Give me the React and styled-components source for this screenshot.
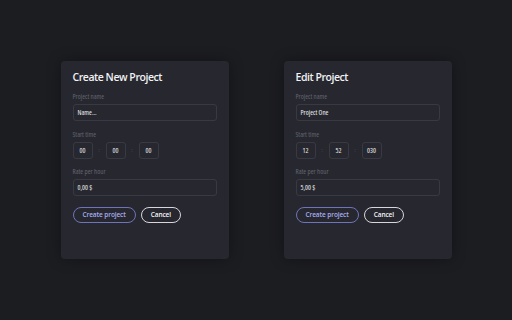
import React from 'react';
import styled, { createGlobalStyle } from 'styled-components';

const GlobalStyle = createGlobalStyle`
  html, body {
    margin: 0;
    padding: 0;
    background: #1c1d21;
  }
  body {
    font-family: 'Open Sans', 'Noto Sans', sans-serif;
  }
`;

export const Page = styled.main`
  width: 512px;
  height: 320px;
  display: flex;
  align-items: center;
  justify-content: center;
  gap: 55px;
`;

export const Card = styled.section`
  width: 168px;
  height: 198px;
  box-sizing: border-box;
  padding: 9px 12px;
  background: #27282f;
  border-radius: 4px;
  box-shadow: 0 0 14px rgba(0, 0, 0, 0.35);
  display: flex;
  flex-direction: column;
`;

export const Title = styled.h2`
  margin: 0 0 9px;
  font-size: 10.5px;
  font-weight: 600;
  letter-spacing: -0.45px;
  line-height: 14px;
  color: #f2f2f5;
`;

export const Field = styled.div`
  display: flex;
  flex-direction: column;
  margin-bottom: 9.5px;
`;

export const Label = styled.label`
  font-size: 7px;
  font-stretch: 75%;
  line-height: 8px;
  color: #62646f;
  margin-bottom: 3px;
`;

export const Input = styled.div`
  height: 17px;
  box-sizing: border-box;
  border: 1px solid #383943;
  border-radius: 3px;
  padding: 0 4px;
  display: flex;
  align-items: center;
  font-size: 7px;
  font-stretch: 75%;
  color: #ececf0;
`;

export const TimeRow = styled.div`
  display: flex;
  align-items: center;
`;

export const TimeBox = styled(Input)`
  width: 20px;
  padding: 0;
  justify-content: center;
`;

export const Colon = styled.span`
  width: 13px;
  text-align: center;
  font-size: 6px;
  color: #4f515a;
`;

export const Actions = styled.div`
  display: flex;
  gap: 5px;
  margin-top: 1.5px;
`;

export const Button = styled.button`
  height: 16px;
  padding: 0 9px;
  border-radius: 8px;
  background: transparent;
  border: 1px solid ${(p) => (p.$primary ? '#6f73b9' : '#d6d6dc')};
  color: ${(p) => (p.$primary ? '#a9acef' : '#f4f4f7')};
  font-family: inherit;
  font-size: 6.5px;
  font-weight: 600;
  letter-spacing: -0.1px;
  line-height: 1;
  cursor: pointer;
`;

const ProjectForm = ({ title, name, time, rate }) => (
  <Card>
    <Title>{title}</Title>
    <Field>
      <Label>Project name</Label>
      <Input>{name}</Input>
    </Field>
    <Field>
      <Label>Start time</Label>
      <TimeRow>
        <TimeBox>{time[0]}</TimeBox>
        <Colon>:</Colon>
        <TimeBox>{time[1]}</TimeBox>
        <Colon>:</Colon>
        <TimeBox>{time[2]}</TimeBox>
      </TimeRow>
    </Field>
    <Field>
      <Label>Rate per hour</Label>
      <Input>{rate}</Input>
    </Field>
    <Actions>
      <Button $primary>Create project</Button>
      <Button>Cancel</Button>
    </Actions>
  </Card>
);

export default function App() {
  return (
    <>
      <GlobalStyle />
      <Page>
        <ProjectForm title="Create New Project" name="Name..." time={['00', '00', '00']} rate="0,00 $" />
        <ProjectForm title="Edit Project" name="Project One" time={['12', '52', '030']} rate="5,00 $" />
      </Page>
    </>
  );
}
